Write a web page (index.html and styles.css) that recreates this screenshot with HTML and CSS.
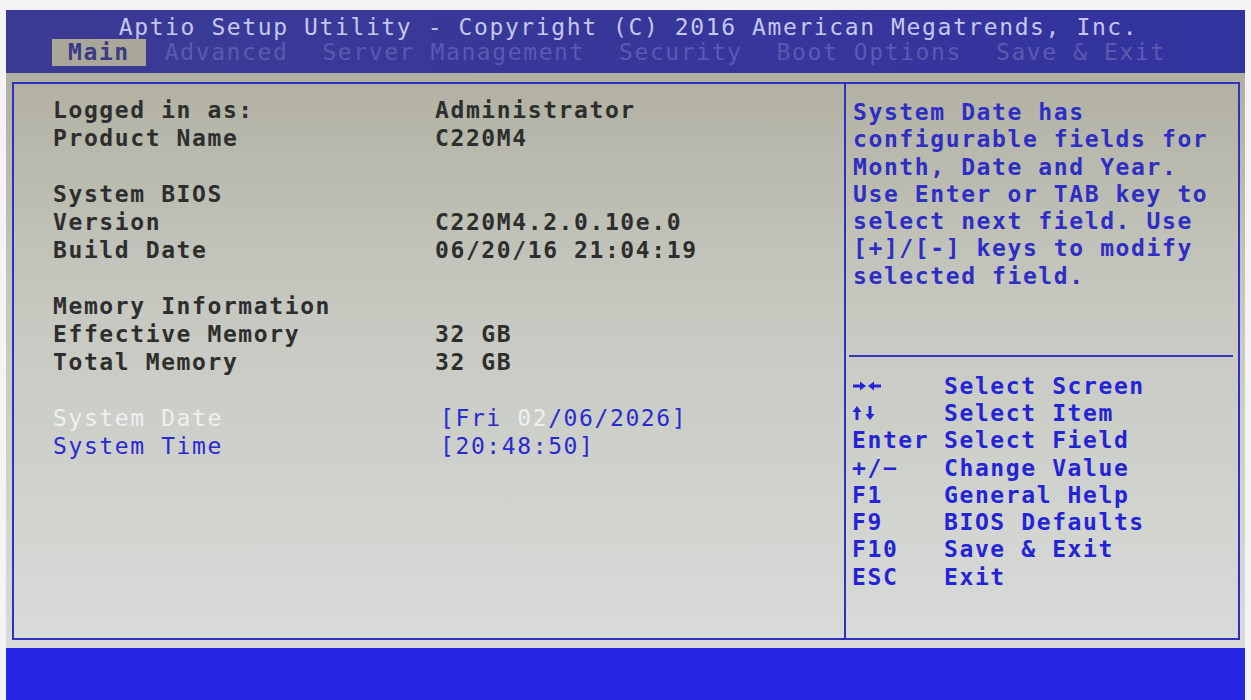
FILE: index.html
```html
<!DOCTYPE html>
<html lang="en">
<head>
<meta charset="UTF-8" />
<title>Aptio Setup Utility</title>
<link rel="stylesheet" href="styles.css">
</head>
<body>

<div class="screen">
  <header class="top">
    <div class="title">Aptio Setup Utility - Copyright (C) 2016 American Megatrends, Inc.</div>
    <ul class="tabs">
      <li class="active">Main</li>
      <li>Advanced</li>
      <li>Server Management</li>
      <li>Security</li>
      <li>Boot Options</li>
      <li>Save &amp; Exit</li>
    </ul>
  </header>

  <main class="body">
    <div class="frame">
      <section class="settings">
        <div class="row"><span class="label">Logged in as:</span><span class="value">Administrator</span></div>
        <div class="row"><span class="label">Product Name</span><span class="value">C220M4</span></div>
        <div class="row blank"></div>
        <div class="row"><span class="label">System BIOS</span></div>
        <div class="row"><span class="label">Version</span><span class="value">C220M4.2.0.10e.0</span></div>
        <div class="row"><span class="label">Build Date</span><span class="value">06/20/16 21:04:19</span></div>
        <div class="row blank"></div>
        <div class="row"><span class="label">Memory Information</span></div>
        <div class="row"><span class="label">Effective Memory</span><span class="value">32 GB</span></div>
        <div class="row"><span class="label">Total Memory</span><span class="value">32 GB</span></div>
        <div class="row blank"></div>
        <div class="row item selected"><span class="label">System Date</span><span class="value">[Fri <em>02</em>/06/2026]</span></div>
        <div class="row item"><span class="label">System Time</span><span class="value">[20:48:50]</span></div>
      </section>

      <aside class="help">
        <p class="help-text">System Date has
configurable fields for
Month, Date and Year.
Use Enter or TAB key to
select next field. Use
[+]/[-] keys to modify
selected field.</p>
        <ul class="keys">
          <li><span class="key"><svg class="icon" width="30" height="14" viewBox="0 0 30 14" aria-hidden="true"><path d="M1 7H11" stroke="currentColor" stroke-width="3"/><path d="M8 2.5L14 7L8 11.5Z" fill="currentColor"/><path d="M19 7H29" stroke="currentColor" stroke-width="3"/><path d="M22 2.5L16 7L22 11.5Z" fill="currentColor"/></svg></span><span>Select Screen</span></li>
          <li><span class="key"><svg class="icon" width="26" height="16" viewBox="0 0 26 16" aria-hidden="true"><path d="M5 5V15" stroke="currentColor" stroke-width="3"/><path d="M0.5 7L5 1L9.5 7Z" fill="currentColor"/><path d="M18 1V11" stroke="currentColor" stroke-width="3"/><path d="M13.5 9L18 15L22.5 9Z" fill="currentColor"/></svg></span><span>Select Item</span></li>
          <li><span class="key">Enter</span><span>Select Field</span></li>
          <li><span class="key">+/&minus;</span><span>Change Value</span></li>
          <li><span class="key">F1</span><span>General Help</span></li>
          <li><span class="key">F9</span><span>BIOS Defaults</span></li>
          <li><span class="key">F10</span><span>Save &amp; Exit</span></li>
          <li><span class="key">ESC</span><span>Exit</span></li>
        </ul>
      </aside>
    </div>
  </main>

  <footer class="bottom"></footer>
</div>

</body>
</html>
```

FILE: styles.css
```css
/* Reset and base */
* {
  box-sizing: border-box;
  margin: 0;
  padding: 0;
}
body {
  background: #f4f4f6;
  font-family: 'DejaVu Sans Mono', 'Liberation Mono', monospace;
  font-size: 23px;
  letter-spacing: 1.6px;
}

.screen {
  margin: 10px 6px 0;
  display: flex;
  flex-direction: column;
  height: 690px;
}

/* Title bar and tabs */
.top {
  background: linear-gradient(to right, #3b3b95, #33339f);
  height: 63px;
  display: flex;
  flex-direction: column;
}
.title {
  color: #c6c6f0;
  text-align: center;
  line-height: 22px;
  padding-top: 6px;
  padding-left: 6px;
}
.tabs {
  list-style: none;
  display: flex;
  margin-top: 1px;
  padding-left: 46px;
  height: 27px;
}
.tabs li {
  color: #5a5ab0;
  padding: 0 15px;
  line-height: 27px;
  white-space: pre;
}
.tabs li + li {
  margin-left: 4px;
}
.tabs li.active {
  background: #a9a898;
  color: #3a3a86;
  font-weight: bold;
  padding: 0 16px;
}

/* Main grey area */
.body {
  flex: 1;
  background: linear-gradient(to bottom, #b1b0a2 0%, #c6c8c0 40%, #d8dbd8 100%);
  padding: 9px 5px 8px 6px;
}
.frame {
  height: 100%;
  border: 2px solid #2f2fc4;
  display: flex;
}

/* Left: settings list */
.settings {
  width: 832px;
  border-right: 2px solid #2f2fc4;
  padding: 12px 0 0 39px;
  font-weight: bold;
  color: #2e2e2e;
}
.row {
  display: flex;
  height: 28px;
  line-height: 28px;
  white-space: pre;
}
.label {
  width: 382px;
}
.item .label,
.item .value {
  color: #2a2ad2;
  font-weight: normal;
}
.item .value {
  padding-left: 5px;
}
.selected .label {
  color: #eef0f2;
}
.value em {
  font-style: normal;
  color: #eef0f2;
}

/* Right: help panel */
.help {
  flex: 1;
  display: flex;
  flex-direction: column;
  color: #2e2ec4;
  font-weight: bold;
}
.help-text {
  white-space: pre;
  line-height: 27.3px;
  padding: 15px 0 0 4px;
  height: 273px;
  border-bottom: 2px solid #3535c8;
  margin: 0 5px 0 3px;
}
.keys {
  list-style: none;
  padding: 15px 0 0 6px;
  color: #2424d6;
}
.keys li {
  display: flex;
  align-items: center;
  height: 27.3px;
  white-space: pre;
}
.key {
  width: 92px;
  flex-shrink: 0;
  display: flex;
  align-items: center;
}
.icon {
  display: block;
  flex-shrink: 0;
}

/* Bottom status bar */
.bottom {
  background: #2626e4;
  height: 52px;
}
```
